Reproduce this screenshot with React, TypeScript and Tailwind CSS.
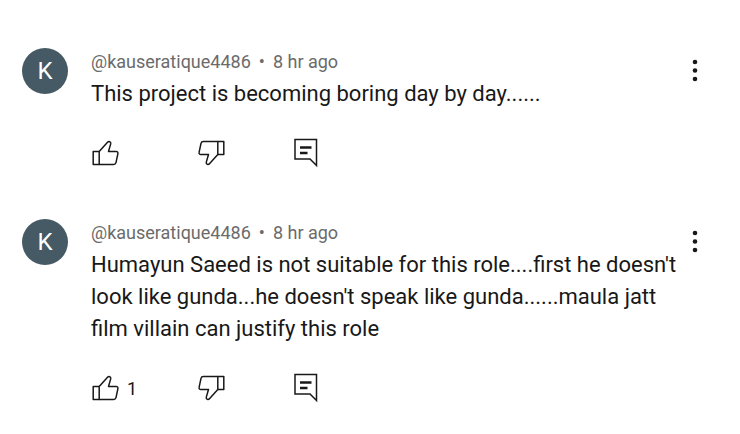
import { useState } from 'react';

const COMMENTS = [
  { id: 1, author: '@kauseratique4486', age: '8 hr ago', text: 'This project is becoming boring day by day......', likes: 0 },
  {
    id: 2,
    author: '@kauseratique4486',
    age: '8 hr ago',
    text: "Humayun Saeed is not suitable for this role....first he doesn't look like gunda...he doesn't speak like gunda......maula jatt film villain can justify this role",
    likes: 1,
  },
];

function ThumbIcon({ down = false }: { down?: boolean }) {
  return (
    <svg width="28" height="28" viewBox="0 0 28 28" fill="none" stroke="currentColor" strokeWidth="1.5" strokeLinejoin="round">
      <g transform={down ? 'rotate(180 14.5 13)' : undefined}>
        <path d="M2.2 11.5h6v13h-6z" />
        <path d="M8.2 11.5L16.3 2.600c.9-1 1.700-1.100 2.400-.9 1 .3 1.200 1.200 1 2.200l-2.200 7.600h7.700c1.300 0 2 .9 1.700 2.100l-1.900 9c-.3 1.300-1.100 1.900-2.400 1.900H8.200" />
      </g>
    </svg>
  );
}

function ReplyIcon() {
  return (
    <svg width="28" height="32" viewBox="0 0 28 32" fill="none" stroke="currentColor">
      <path d="M2 1.500h21.500v26l-6.500-6.500H2z" strokeWidth="1.5" />
      <path d="M7 9.500h11.500M7 15h7.500" strokeWidth="2.5" />
    </svg>
  );
}

function Comment({ comment }: { comment: (typeof COMMENTS)[number] }) {
  const [liked, setLiked] = useState(false);

  return (
    <article className="flex items-start">
      <div className="mt-0.5 flex size-[46px] shrink-0 items-center justify-center rounded-full bg-[#455a64] text-2xl text-white">K</div>
      <div className="ml-[23px] min-w-0 flex-1">
        <p className="flex gap-2 text-lg leading-8 text-[#6b6b6b]">
          <span>{comment.author}</span>
          <span>•</span>
          <span>{comment.age}</span>
        </p>
        <p className="text-[22px] leading-8">{comment.text}</p>
        <div className="mt-7 flex h-8 items-center">
          <button aria-label="Like" aria-pressed={liked} onClick={() => setLiked(!liked)} className="flex w-[106px] items-center gap-2 text-lg">
            <ThumbIcon />
            {comment.likes > 0 && <span>{comment.likes}</span>}
          </button>
          <button aria-label="Dislike" className="w-24">
            <ThumbIcon down />
          </button>
          <button aria-label="Reply">
            <ReplyIcon />
          </button>
        </div>
      </div>
      <button aria-label="More options" className="mt-3 w-8">
        <svg width="8" height="24" viewBox="0 0 8 24" fill="currentColor" className="mx-auto">
          <circle cx="4" cy="4" r="2.300" />
          <circle cx="4" cy="12.500" r="2.300" />
          <circle cx="4" cy="21" r="2.300" />
        </svg>
      </button>
    </article>
  );
}

export default function App() {
  return (
    <main className="space-y-[47px] bg-white py-[46px] pr-[29px] pl-[22px] font-['Roboto',sans-serif] text-[#181818]">
      {COMMENTS.map(comment => (
        <Comment key={comment.id} comment={comment} />
      ))}
    </main>
  );
}
